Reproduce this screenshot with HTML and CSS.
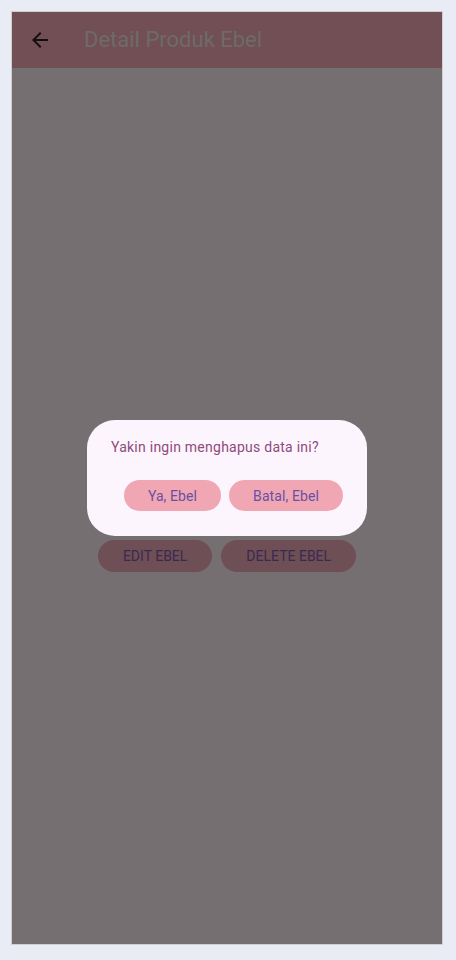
FILE: index.html
```html
<!DOCTYPE html>
<html lang="id">
<head>
<meta charset="utf-8">
<title>Detail Produk Ebel</title>
<link rel="stylesheet" href="styles.css">
</head>
<body>
<div class="frame">
  <header class="appbar">
    <span class="back">
      <svg width="24" height="24" viewBox="0 0 24 24"><path d="M20 11H7.83l5.59-5.59L12 4l-8 8 8 8 1.41-1.41L7.83 13H20v-2z" fill="#141012"/></svg>
    </span>
    <h1 class="title">Detail Produk Ebel</h1>
  </header>
  <main class="content">
    <div class="actions">
      <button class="btn-bg">EDIT EBEL</button>
      <button class="btn-bg">DELETE EBEL</button>
    </div>
  </main>
  <div class="overlay">
    <div class="dialog">
      <p class="dialog-text">Yakin ingin menghapus data ini?</p>
      <div class="dialog-actions">
        <button class="btn-dlg">Ya, Ebel</button>
        <button class="btn-dlg">Batal, Ebel</button>
      </div>
    </div>
  </div>
</div>
</body>
</html>
```

FILE: styles.css
```css
* { box-sizing: border-box; }
html, body { margin: 0; padding: 0; }
body {
  background: #e9ecf4;
  padding: 11px;
  font-family: Roboto, "Noto Sans", sans-serif;
}
.frame {
  position: relative;
  width: 432px;
  height: 934px;
  border: 1px solid #cfcfd2;
  display: flex;
  flex-direction: column;
  background: #766f71;
}
.appbar {
  height: 56px;
  background: #714f55;
  display: flex;
  align-items: center;
  padding-left: 16px;
}
.back {
  width: 24px;
  height: 24px;
  display: flex;
}
.title {
  margin: 0 0 0 32px;
  font-size: 22px;
  font-weight: 400;
  color: #6e6a6a;
  line-height: 28px;
}
.content {
  flex: 1;
  display: flex;
  flex-direction: column;
  align-items: center;
  padding-top: 472px;
}
.actions {
  display: flex;
  gap: 9px;
}
.btn-bg {
  height: 32px;
  padding: 0 25px;
  border: none;
  border-radius: 16px;
  background: #6f4f56;
  color: #3b2a4f;
  font-family: Roboto, sans-serif;
  font-size: 14px;
  font-weight: 400;
}
.overlay {
  position: absolute;
  inset: 0;
  display: flex;
  align-items: center;
  justify-content: center;
}
.dialog {
  width: 280px;
  background: #fdf5fd;
  border-radius: 28px;
  padding: 17px 24px 25px 24px;
}
.dialog-text {
  margin: 0;
  font-size: 14px;
  line-height: 20px;
  letter-spacing: 0.25px;
  color: #8e4a7c;
}
.dialog-actions {
  margin-top: 23px;
  display: flex;
  justify-content: flex-end;
  gap: 8px;
}
.btn-dlg {
  height: 31px;
  padding: 0 24px;
  border: none;
  border-radius: 16px;
  background: #f0a7b3;
  color: #6b4fa3;
  font-family: Roboto, sans-serif;
  font-size: 14px;
  font-weight: 400;
  letter-spacing: 0.1px;
}
```
